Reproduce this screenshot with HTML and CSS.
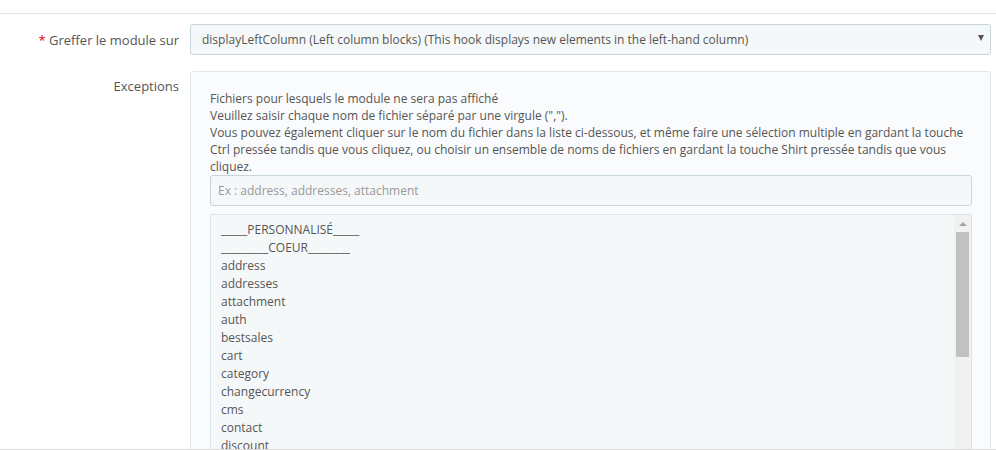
FILE: index.html
```html
<!DOCTYPE html>
<html lang="fr">
<head>
<meta charset="utf-8">
<title>Greffer le module</title>
<link rel="stylesheet" href="styles.css">
</head>
<body>
<div class="page">
  <div class="top-rule"></div>
  <div class="form-row row-hook">
    <label class="lbl"><span class="req">*</span> Greffer le module sur</label>
    <div class="ctl">
      <div class="select">
        <span class="select-text">displayLeftColumn (Left column blocks) (This hook displays new elements in the left-hand column)</span>
        <span class="caret"></span>
      </div>
    </div>
  </div>
  <div class="form-row row-exc">
    <label class="lbl lbl-exc">Exceptions</label>
    <div class="ctl">
      <div class="panel">
        <p class="help">Fichiers pour lesquels le module ne sera pas affiché<br>Veuillez saisir chaque nom de fichier séparé par une virgule (",").<br>Vous pouvez également cliquer sur le nom du fichier dans la liste ci-dessous, et même faire une sélection multiple en gardant la touche Ctrl pressée tandis que vous cliquez, ou choisir un ensemble de noms de fichiers en gardant la touche Shirt pressée tandis que vous cliquez.</p>
        <input class="text-input" type="text" placeholder="Ex : address, addresses, attachment">
        <div class="listbox">
          <ul class="options">
            <li>_____PERSONNALISÉ_____</li>
            <li>_________COEUR________</li>
            <li>address</li>
            <li>addresses</li>
            <li>attachment</li>
            <li>auth</li>
            <li>bestsales</li>
            <li>cart</li>
            <li>category</li>
            <li>changecurrency</li>
            <li>cms</li>
            <li>contact</li>
            <li>discount</li>
          </ul>
          <div class="scrollbar">
            <div class="sb-arrow"><span class="sb-tri"></span></div>
            <div class="sb-thumb"></div>
          </div>
        </div>
      </div>
    </div>
  </div>
</div>
</body>
</html>
```
FILE: styles.css
```css
html, body {
  margin: 0;
  padding: 0;
  background: #fff;
}
body {
  font-family: "Open Sans", "Noto Sans", sans-serif;
  font-size: 12px;
  color: #555;
}
.page {
  height: 449px;
  border-bottom: 1px solid #dcdcdc;
  overflow: hidden;
}
.top-rule {
  margin-top: 13px;
  border-top: 1px solid #e4e4e4;
}
.form-row {
  display: grid;
  grid-template-columns: 190px 801px;
}
.row-hook {
  margin-top: 10px;
}
.row-exc {
  margin-top: 16px;
}
.lbl {
  text-align: right;
  padding-right: 11px;
  font-size: 13px;
  line-height: 18px;
  padding-top: 7px;
  color: #555;
}
.lbl-exc {
  padding-top: 6px;
}
.req {
  color: #e30000;
}
.select {
  box-sizing: border-box;
  height: 31px;
  border: 1px solid #c7d6db;
  border-radius: 3px;
  background: #f5f8f9;
  display: flex;
  align-items: center;
  justify-content: space-between;
  padding: 0 6px 0 11px;
}
.select-text {
  white-space: nowrap;
}
.caret {
  width: 0;
  height: 0;
  border-left: 3.5px solid transparent;
  border-right: 3.5px solid transparent;
  border-top: 6px solid #555;
  margin-top: -3px;
}
.panel {
  border: 1px solid #e0e8ee;
  border-radius: 3px;
  background: #fafbfc;
  padding: 18px 18px 0 19px;
}
.help {
  margin: 0;
  line-height: 17px;
}
.text-input {
  display: block;
  box-sizing: border-box;
  width: 100%;
  height: 31px;
  margin: 0;
  border: 1px solid #c7d6db;
  border-radius: 3px;
  background: #f5f8f9;
  padding: 0 8px 0 7px;
  font-family: inherit;
  font-size: 12px;
  color: #555;
  outline: none;
}
.text-input::placeholder {
  color: #999;
}
.listbox {
  margin-top: 8px;
  height: 300px;
  border: 1px solid #d9e3e8;
  border-radius: 2px;
  background: #f5f8f9;
  display: flex;
}
.options {
  flex: 1;
  list-style: none;
  margin: 0;
  padding: 6px 0 0 10px;
}
.options li {
  line-height: 18px;
  white-space: nowrap;
}
.scrollbar {
  width: 17px;
  background: #f1f1f1;
  display: flex;
  flex-direction: column;
  align-items: center;
}
.sb-arrow {
  height: 17px;
  width: 17px;
  display: flex;
  align-items: center;
  justify-content: center;
}
.sb-tri {
  width: 0;
  height: 0;
  border-left: 4px solid transparent;
  border-right: 4px solid transparent;
  border-bottom: 4px solid #a3a3a3;
}
.sb-thumb {
  width: 13px;
  height: 125px;
  background: #c1c1c1;
}
```
